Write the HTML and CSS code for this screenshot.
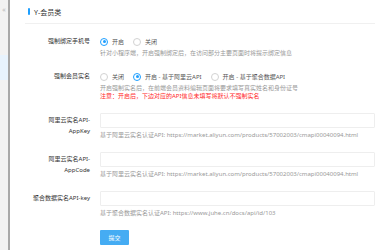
FILE: index.html
```html
<!DOCTYPE html>
<html lang="zh-CN">
<head>
    <meta charset="UTF-8">
    <title>Y-会员类</title>
    <link rel="stylesheet" href="styles.css">
</head>
<body>
    <div class="layout">
        <div class="side">
            <div class="side-fold">&laquo;</div>
            <div class="side-active"></div>
        </div>
        <div class="main">
            <div class="panel-title"><span class="bar"></span>Y-会员类</div>

            <div class="form-item">
                <div class="form-label">强制绑定手机号</div>
                <div class="form-block">
                    <div class="radios">
                        <span class="radio checked"><i></i>开启</span>
                        <span class="radio"><i></i>关闭</span>
                    </div>
                    <div class="aux">针对小程序端，开启强制绑定后，在访问部分主要页面时将提示绑定信息</div>
                </div>
            </div>

            <div class="form-item item-2">
                <div class="form-label">强制会员实名</div>
                <div class="form-block">
                    <div class="radios">
                        <span class="radio"><i></i>关闭</span>
                        <span class="radio checked"><i></i>开启 - 基于阿里云API</span>
                        <span class="radio"><i></i>开启 - 基于聚合数据API</span>
                    </div>
                    <div class="aux">开启强制实名后，在前端会员资料编辑页面将要求填写真实姓名和身份证号</div>
                    <div class="aux warn">注意：开启后，下边对应的API信息未填写将默认不强制实名</div>
                </div>
            </div>

            <div class="form-item item-input">
                <div class="form-label">阿里云实名API-<br>AppKey</div>
                <div class="form-block">
                    <input class="input" type="text">
                    <div class="aux">基于阿里云实名认证API: https://market.aliyun.com/products/57002003/cmapi00040094.html</div>
                </div>
            </div>

            <div class="form-item item-input">
                <div class="form-label">阿里云实名API-<br>AppCode</div>
                <div class="form-block">
                    <input class="input" type="text">
                    <div class="aux">基于阿里云实名认证API: https://market.aliyun.com/products/57002003/cmapi00040094.html</div>
                </div>
            </div>

            <div class="form-item item-input">
                <div class="form-label">聚合数据实名API-key</div>
                <div class="form-block">
                    <input class="input" type="text">
                    <div class="aux">基于聚合数据实名认证API: https://www.juhe.cn/docs/api/id/103</div>
                </div>
            </div>

            <div class="form-item item-btn">
                <div class="form-label"></div>
                <div class="form-block">
                    <button class="btn">提交</button>
                </div>
            </div>
        </div>
    </div>
</body>
</html>
```

FILE: styles.css
```css
body {
    margin: 0;
    font-family: "Noto Sans", "Noto Sans CJK SC", sans-serif;
    font-size: 6px;
    color: #333;
    background-color: #fff;
    overflow: hidden;
}

.layout {
    display: flex;
    height: 250px;
}

.side {
    width: 8px;
    background-color: #f2f2f2;
    border-right: 2px solid #a8a8a8;
    display: flex;
    flex-direction: column;
}

.side-fold {
    height: 20px;
    line-height: 20px;
    text-align: center;
    font-size: 7px;
    color: #bbb;
}

.side-active {
    margin-top: 35px;
    height: 25px;
    background-color: #e8f3fd;
}

.main {
    flex: 1;
    padding-left: 15px;
}

.panel-title {
    display: flex;
    align-items: center;
    gap: 4px;
    height: 23px;
    font-size: 7px;
    color: #333;
    border-bottom: 1px solid #f0f0f0;
    padding-left: 3px;
}

.panel-title .bar {
    width: 2px;
    height: 7px;
    border-radius: 1px;
    background-color: #1e9fff;
}

.form-item {
    display: flex;
    margin-top: 13px;
}

.item-2 {
    margin-top: 15px;
}

.item-btn {
    margin-top: 13px;
}

.form-label {
    width: 75px;
    flex-shrink: 0;
    padding-right: 10px;
    box-sizing: border-box;
    text-align: right;
    line-height: 9px;
    white-space: nowrap;
}

.item-input .form-label {
    padding-top: 2px;
    line-height: 11px;
}

.form-block {
    flex: 1;
}

.radios {
    display: flex;
    align-items: center;
    height: 9px;
}

.radio {
    display: flex;
    align-items: center;
    gap: 4px;
    margin-right: 9px;
    color: #555;
}

.radio i {
    width: 6px;
    height: 6px;
    border: 1px solid #d2d2d2;
    border-radius: 50%;
    position: relative;
}

.radio.checked i {
    border-color: #1e9fff;
}

.radio.checked i::after {
    content: "";
    position: absolute;
    left: 1.5px;
    top: 1.5px;
    width: 3px;
    height: 3px;
    border-radius: 50%;
    background-color: #1e9fff;
}

.aux {
    margin-top: 3px;
    line-height: 8px;
    color: #999;
    white-space: nowrap;
}

.aux + .aux {
    margin-top: 0;
}

.warn {
    color: #ff2a2a;
}

.input {
    display: block;
    width: 100%;
    height: 15px;
    box-sizing: border-box;
    border: 1px solid #eee;
    border-radius: 1px;
    margin: 0;
    padding: 0 4px;
}

.item-input .aux {
    margin-top: 3px;
}

.btn {
    width: 29px;
    height: 15px;
    border: none;
    border-radius: 1px;
    background-color: #45acf3;
    color: #fff;
    font-family: "Noto Sans", "Noto Sans CJK SC", sans-serif;
    font-size: 6px;
    padding: 0;
}
```
